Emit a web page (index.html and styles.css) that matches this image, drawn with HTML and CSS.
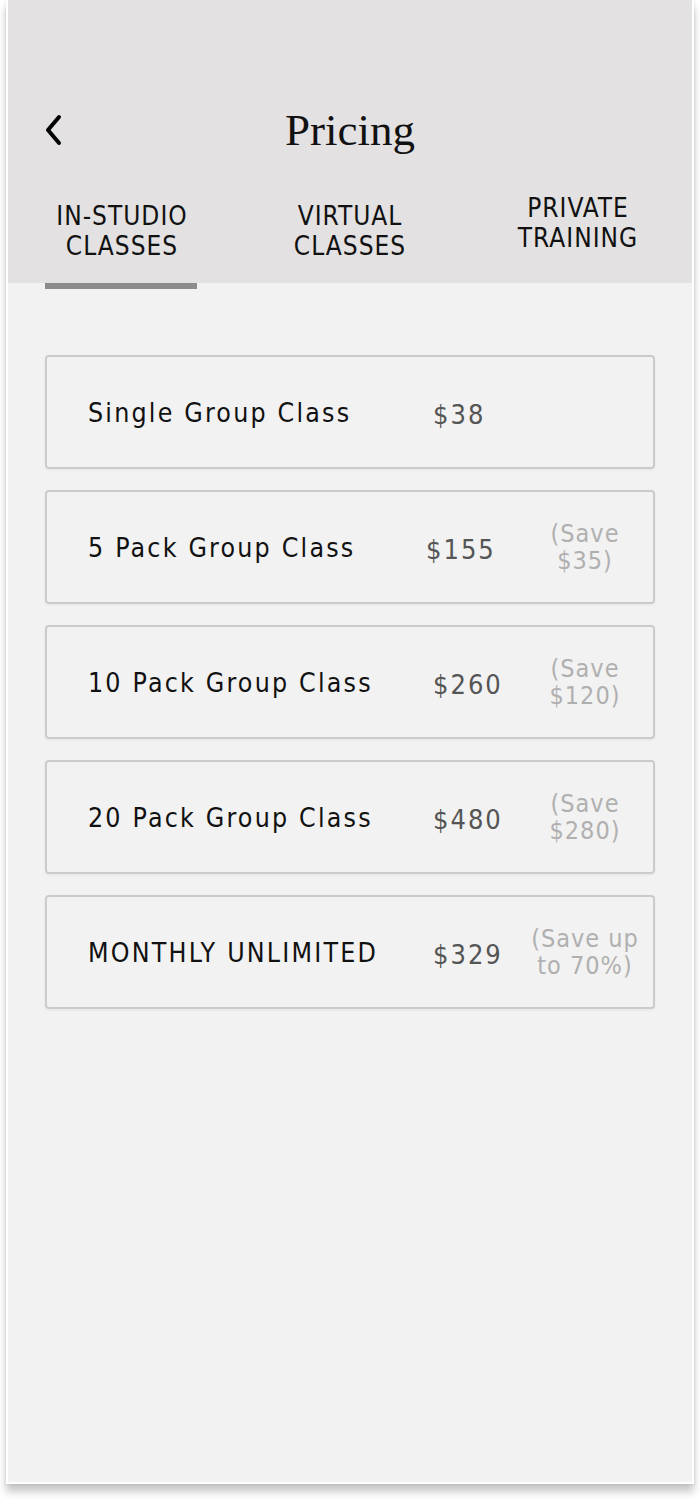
FILE: index.html
```html
<html>
<head>
<link rel="stylesheet" href="styles.css">
</head>
<body>
<div class="phone">
  <div class="header">
    <div class="topbar">
      <svg class="back" width="20" height="32" viewBox="0 0 20 32">
        <path d="M15 3 L4 16 L15 29" fill="none" stroke="#000" stroke-width="4" stroke-linecap="round" stroke-linejoin="round"/>
      </svg>
      <div class="title">Pricing</div>
    </div>
    <div class="tabs">
      <div class="tab">IN-STUDIO<br>CLASSES</div>
      <div class="tab">VIRTUAL<br>CLASSES</div>
      <div class="tab tab-raised">PRIVATE<br>TRAINING</div>
    </div>
  </div>
  <div class="indicator-row"><div class="indicator"></div></div>

  <div class="cards">
    <div class="card">
      <span class="name">Single Group Class</span>
      <span class="price">$38</span>
      <span class="save"></span>
    </div>
    <div class="card">
      <span class="name">5 Pack Group Class</span>
      <span class="price price-wide">$155</span>
      <span class="save">(Save<br>$35)</span>
    </div>
    <div class="card">
      <span class="name">10 Pack Group Class</span>
      <span class="price">$260</span>
      <span class="save">(Save<br>$120)</span>
    </div>
    <div class="card">
      <span class="name">20 Pack Group Class</span>
      <span class="price">$480</span>
      <span class="save">(Save<br>$280)</span>
    </div>
    <div class="card">
      <span class="name">MONTHLY UNLIMITED</span>
      <span class="price">$329</span>
      <span class="save">(Save up<br>to 70%)</span>
    </div>
  </div>
</div>
</body>
</html>
```
FILE: styles.css
```css
body {
  margin: 0;
  background-color: #ffffff;
  font-family: "DejaVu Sans", sans-serif;
  font-stretch: condensed;
}

.phone {
  margin-left: 6px;
  width: 684px;
  height: 1482px;
  border: 2px solid #ffffff;
  border-top: none;
  background-color: #f2f2f2;
  box-shadow: 0 0 3px rgba(0,0,0,0.12), 0 8px 8px rgba(0,0,0,0.22);
}

.header {
  background-color: #e3e1e2;
  height: 283px;
  padding-top: 100px;
  box-sizing: border-box;
}

.topbar {
  height: 60px;
  display: flex;
  align-items: center;
  justify-content: center;
  position: relative;
}

.back {
  position: absolute;
  left: 36px;
  top: 14px;
}

.title {
  font-family: "Liberation Serif", serif;
  font-size: 45px;
  color: #111;
}

.tabs {
  display: grid;
  grid-template-columns: 1fr 1fr 1fr;
  align-items: end;
  height: 123px;
}

.tab {
  text-align: center;
  font-size: 26px;
  line-height: 30px;
  letter-spacing: 1px;
  color: #111;
  padding-bottom: 22px;
}

.tab-raised {
  padding-bottom: 30px;
}

.indicator-row {
  padding-left: 37px;
}

.indicator {
  width: 152px;
  height: 6px;
  background-color: #8c8c8c;
}

.cards {
  padding: 66px 37px 0 37px;
  display: flex;
  flex-direction: column;
  gap: 21px;
}

.card {
  height: 114px;
  box-sizing: border-box;
  border: 2px solid #cbcbcb;
  border-radius: 4px;
  display: grid;
  grid-template-columns: 345px 94px 1fr;
  align-items: center;
  padding: 0 10px 0 41px;
  box-shadow: 0 1px 3px rgba(0,0,0,0.06);
}

.name {
  font-size: 26.5px;
  letter-spacing: 2.2px;
  color: #111;
}

.price {
  font-size: 27px;
  letter-spacing: 2px;
  color: #555;
  padding-top: 4px;
}

.price-wide {
  margin-left: -7px;
}

.save {
  text-align: center;
  font-size: 25px;
  line-height: 27px;
  letter-spacing: 1px;
  color: #b0b0b0;
}
```
